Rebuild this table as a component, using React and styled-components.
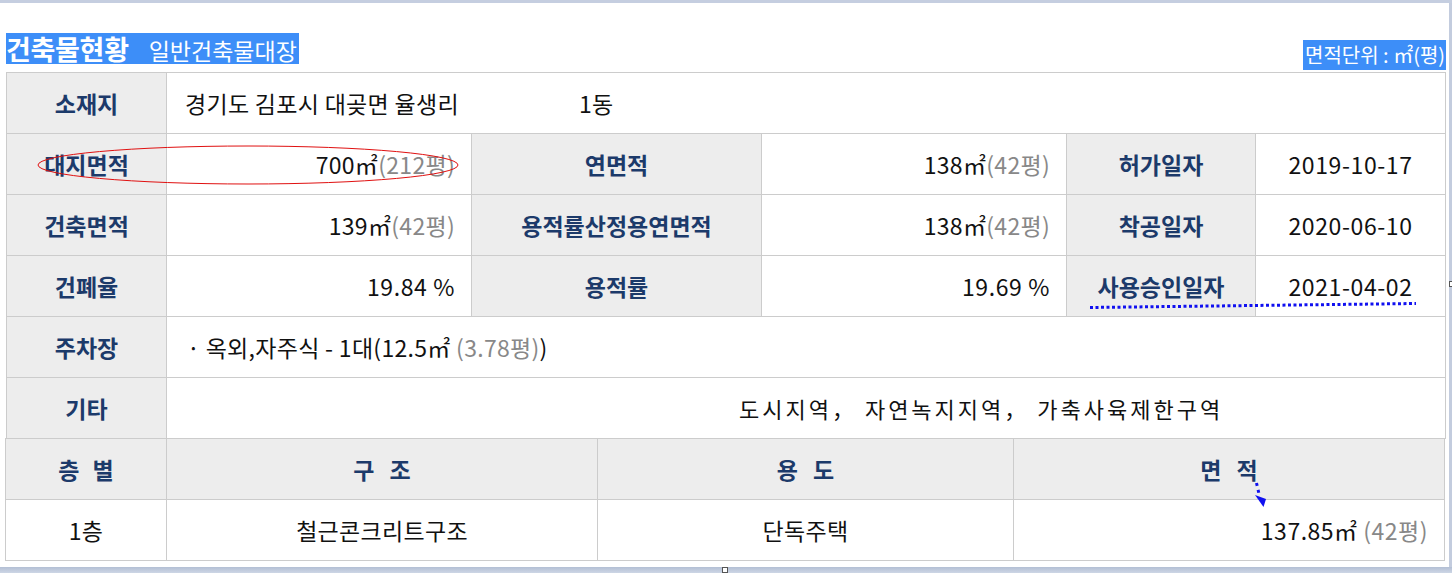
import React from "react";
import styled, { createGlobalStyle } from "styled-components";

const Global = createGlobalStyle`
  html, body { margin: 0; padding: 0; background: #fff; }
  body { font-family: "Noto Sans CJK KR", "Noto Sans", sans-serif; }
`;

const Window = styled.div`
  position: relative;
  width: 1452px;
  height: 573px;
  display: flex;
  flex-direction: column;
  overflow: hidden;
  background: #fff;
`;
const TopBar = styled.div`
  flex: none;
  height: 3px;
  background: #c5cee0;
`;
const Middle = styled.div`
  flex: 1;
  display: flex;
  min-height: 0;
`;
const Page = styled.div`
  flex: 1;
  position: relative;
  padding: 30px 3px 0 6px;
  background: #fff;
`;
const SideBar = styled.div`
  position: relative;
  width: 4px;
  background: #c3ccde;
`;
const BottomBar = styled.div`
  position: relative;
  flex: none;
  height: 6px;
  background: linear-gradient(#b3bfd4, #cdd6e5);
`;
const Handle = styled.span`
  position: absolute;
  width: 4px;
  height: 4px;
  border: 1px solid #555;
  background: #fff;
  left: ${(p) => p.$x}px;
  top: ${(p) => p.$y}px;
`;

const Header = styled.div`
  display: flex;
  justify-content: space-between;
  align-items: flex-start;
  height: 39px;
`;
const Highlight = styled.div`
  display: inline-flex;
  align-items: baseline;
  background: #3d8ef8;
  color: #fff;
  height: 31px;
  line-height: 31px;
  white-space: nowrap;
  padding-right: 2px;
`;
const TitleMain = styled.span`
  font-size: 27px;
  font-weight: 700;
  letter-spacing: -0.3px;
`;
const TitleSub = styled.span`
  font-size: 23px;
  margin-left: 20px;
`;
const UnitNote = styled(Highlight)`
  margin-top: 7px;
  height: 30px;
  line-height: 30px;
  font-size: 20px;
  padding: 0 1px 0 2px;
`;

const Table = styled.table`
  border-collapse: collapse;
  table-layout: fixed;
  width: ${(p) => p.$w}px;
  font-size: 23px;
  margin-left: ${(p) => p.$shift || 0}px;
  margin-top: ${(p) => p.$top || 0}px;
`;
const Label = styled.th`
  background: #ededed;
  color: #1c3a6a;
  font-weight: 700;
  border: 1px solid #cccccc;
  height: 60px;
  padding: 0 0 0 ${(p) => p.$spread || 0}px;
  text-align: center;
  letter-spacing: ${(p) => p.$spread || 0}px;
  white-space: nowrap;
`;
const Value = styled.td`
  border: 1px solid #cccccc;
  height: 60px;
  padding: 0 ${(p) => p.$pr ?? 16}px 0 ${(p) => p.$pl ?? 16}px;
  color: #111;
  text-align: ${(p) => p.$align || "left"};
  white-space: nowrap;
  letter-spacing: ${(p) => p.$spread ?? 0.3}px;
  font-size: ${(p) => p.$size || 23}px;
`;
const Muted = styled.span`
  color: #888;
`;
const Gap = styled.span`
  display: inline-block;
  width: ${(p) => p.$w}px;
`;

const Overlay = styled.svg`
  position: absolute;
  left: 0;
  top: 0;
  width: 1448px;
  height: 564px;
  pointer-events: none;
  overflow: visible;
`;

function Area({ m, p, sep = "" }) {
  return (
    <>
      {m}㎡{sep}
      <Muted>({p}평)</Muted>
    </>
  );
}

export default function App() {
  return (
    <>
      <Global />
      <Window>
        <TopBar />
        <Middle>
          <Page>
            <Header>
              <Highlight>
                <TitleMain>건축물현황</TitleMain>
                <TitleSub>일반건축물대장</TitleSub>
              </Highlight>
              <UnitNote>면적단위 : ㎡(평)</UnitNote>
            </Header>

            <Table $w={1439}>
              <colgroup>
                <col style={{ width: 160 }} />
                <col style={{ width: 305 }} />
                <col style={{ width: 290 }} />
                <col style={{ width: 305 }} />
                <col style={{ width: 189 }} />
                <col style={{ width: 190 }} />
              </colgroup>
              <tbody>
                <tr>
                  <Label>소재지</Label>
                  <Value colSpan={5} $pl={18}>
                    경기도 김포시 대곶면 율생리
                    <Gap $w={120} />
                    1동
                  </Value>
                </tr>
                <tr>
                  <Label>대지면적</Label>
                  <Value $align="right">
                    <Area m="700" p="212" />
                  </Value>
                  <Label>연면적</Label>
                  <Value $align="right">
                    <Area m="138" p="42" />
                  </Value>
                  <Label>허가일자</Label>
                  <Value $align="center" $pl={0} $pr={0} $spread={0.6}>
                    2019-10-17
                  </Value>
                </tr>
                <tr>
                  <Label>건축면적</Label>
                  <Value $align="right">
                    <Area m="139" p="42" />
                  </Value>
                  <Label>용적률산정용연면적</Label>
                  <Value $align="right">
                    <Area m="138" p="42" />
                  </Value>
                  <Label>착공일자</Label>
                  <Value $align="center" $pl={0} $pr={0} $spread={0.6}>
                    2020-06-10
                  </Value>
                </tr>
                <tr>
                  <Label>건폐율</Label>
                  <Value $align="right" $spread={0.6}>19.84 %</Value>
                  <Label>용적률</Label>
                  <Value $align="right" $spread={0.6}>19.69 %</Value>
                  <Label>사용승인일자</Label>
                  <Value $align="center" $pl={0} $pr={0} $spread={0.6}>
                    2021-04-02
                  </Value>
                </tr>
                <tr>
                  <Label>주차장</Label>
                  <Value colSpan={5} $pl={20}>
                    · 옥외,자주식 - 1대(12.5㎡ <Muted>(3.78평)</Muted>)
                  </Value>
                </tr>
                <tr>
                  <Label>기타</Label>
                  <Value colSpan={5} $pl={572} $spread={3} $size={22}>
                    도시지역， 자연녹지지역， 가축사육제한구역
                  </Value>
                </tr>
              </tbody>
            </Table>

            <Table $w={1439} $shift={-1} $top={-1}>
              <colgroup>
                <col style={{ width: 161 }} />
                <col style={{ width: 431 }} />
                <col style={{ width: 416 }} />
                <col style={{ width: 431 }} />
              </colgroup>
              <tbody>
                <tr>
                  <Label $spread={4}>층 별</Label>
                  <Label $spread={5}>구 조</Label>
                  <Label $spread={5}>용 도</Label>
                  <Label $spread={5}>면 적</Label>
                </tr>
                <tr>
                  <Value $align="center">1층</Value>
                  <Value $align="center">철근콘크리트구조</Value>
                  <Value $align="center">단독주택</Value>
                  <Value $align="right" $spread={0.5}>
                    <Area m="137.85" p="42" sep=" " />
                  </Value>
                </tr>
              </tbody>
            </Table>

            <Overlay viewBox="0 0 1448 564">
              <ellipse cx="248" cy="162" rx="210" ry="19" fill="none" stroke="#e01010" strokeWidth="1" />
              <line x1="1090" y1="304.5" x2="1416" y2="300.5" stroke="#1010f0" strokeWidth="3" strokeDasharray="3 2.5" />
              <line x1="1256.5" y1="480" x2="1259.5" y2="493" stroke="#1010f0" strokeWidth="3" strokeDasharray="3 4" />
              <polygon points="1255,492 1266,496 1263.5,504" fill="#1010f0" />
            </Overlay>
          </Page>
          <SideBar>
            <Handle $x={0} $y={278} />
          </SideBar>
        </Middle>
        <BottomBar>
          <Handle $x={722} $y={0} />
        </BottomBar>
      </Window>
    </>
  );
}
